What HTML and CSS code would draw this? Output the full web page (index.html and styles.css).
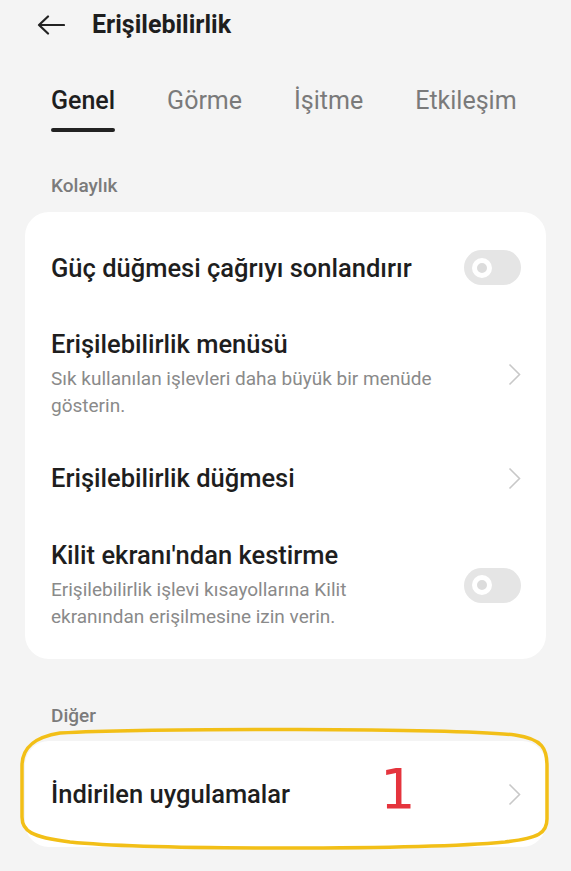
FILE: index.html
```html
<!DOCTYPE html>
<html lang="tr">
<head>
<meta charset="utf-8">
<title>Erişilebilirlik</title>
<link rel="stylesheet" href="styles.css">
</head>
<body>
<div class="screen">
  <header class="topbar">
    <svg class="back" width="28" height="20" viewBox="0 0 28 20" aria-hidden="true">
      <path d="M27 10 H2 M11 1.5 L2 10 L11 18.5" fill="none" stroke="#222" stroke-width="2.2" stroke-linecap="round" stroke-linejoin="round"/>
    </svg>
    <h1 class="title">Erişilebilirlik</h1>
  </header>

  <nav class="tabs">
    <span class="tab active">Genel</span>
    <span class="tab">Görme</span>
    <span class="tab">İşitme</span>
    <span class="tab">Etkileşim</span>
  </nav>

  <div class="section-label first">Kolaylık</div>
  <div class="card">
    <div class="row">
      <div class="row-text">
        <div class="row-title">Güç düğmesi çağrıyı sonlandırır</div>
      </div>
      <div class="toggle"><span class="knob"></span></div>
    </div>
    <div class="row">
      <div class="row-text">
        <div class="row-title">Erişilebilirlik menüsü</div>
        <div class="row-sub">Sık kullanılan işlevleri daha büyük bir menüde gösterin.</div>
      </div>
      <svg class="chev" width="13" height="23" viewBox="0 0 13 23" aria-hidden="true"><polyline points="1.5,1.5 11.5,11.5 1.5,21.5" fill="none" stroke="#c8c8c8" stroke-width="1.6"/></svg>
    </div>
    <div class="row">
      <div class="row-text">
        <div class="row-title">Erişilebilirlik düğmesi</div>
      </div>
      <svg class="chev" width="13" height="23" viewBox="0 0 13 23" aria-hidden="true"><polyline points="1.5,1.5 11.5,11.5 1.5,21.5" fill="none" stroke="#c8c8c8" stroke-width="1.6"/></svg>
    </div>
    <div class="row row-lock">
      <div class="row-text">
        <div class="row-title">Kilit ekranı'ndan kestirme</div>
        <div class="row-sub">Erişilebilirlik işlevi kısayollarına Kilit ekranından erişilmesine izin verin.</div>
      </div>
      <div class="toggle"><span class="knob"></span></div>
    </div>
  </div>

  <div class="section-label second">Diğer</div>
  <div class="card card-other">
    <div class="row row-single">
      <div class="row-text">
        <div class="row-title">İndirilen uygulamalar</div>
      </div>
      <svg class="chev" width="13" height="23" viewBox="0 0 13 23" aria-hidden="true"><polyline points="1.5,1.5 11.5,11.5 1.5,21.5" fill="none" stroke="#c8c8c8" stroke-width="1.6"/></svg>
    </div>
    <span class="mark-number">1</span>
    <svg class="mark-outline" width="545" height="140" viewBox="-10 -20 545 140" aria-hidden="true">
      <path d="M35 -8 C125 -13 425 -13 490 -6 C518 -2 522 8 522 25 L522 78 C522 92 514 97 480 101 C395 109 125 109 45 101 C6 96 -3 90 -3 76 L-3 25 C-3 6 10 -4 35 -8 Z" fill="none" stroke="#f2bf17" stroke-width="3.5"/>
    </svg>
  </div>
</div>
</body>
</html>
```

FILE: styles.css
```css
* { box-sizing: border-box; }

html, body {
  margin: 0;
  padding: 0;
  background: #f4f4f4;
}

body {
  font-family: Roboto, "Noto Sans", "Liberation Sans", sans-serif;
  color: #1e1e1e;
}

.screen {
  width: 571px;
  min-height: 871px;
  background: #f4f4f4;
}

.topbar {
  height: 50px;
  display: flex;
  align-items: center;
  padding-left: 37px;
  gap: 27px;
}

.back { display: block; flex: none; }

.title {
  margin: 0;
  font-size: 25px;
  font-weight: 700;
  line-height: 30px;
  color: #1e1e1e;
}

.tabs {
  display: flex;
  gap: 52px;
  padding: 36px 0 0 51px;
}

.tab {
  display: flex;
  flex-direction: column;
  font-size: 25px;
  line-height: 30px;
  color: #7a7a7a;
}

.tab.active {
  color: #1e1e1e;
  font-weight: 500;
}

.tab.active::after {
  content: "";
  display: block;
  height: 4px;
  margin-top: 12px;
  border-radius: 2px;
  background: #222;
}

.section-label {
  padding-left: 51px;
  font-size: 19px;
  font-weight: 500;
  line-height: 22px;
  color: #7b7b7b;
}

.section-label.first { margin-top: 43px; }
.section-label.second { margin-top: 46px; }

.card {
  margin: 15px 25px 0;
  background: #fff;
  border-radius: 24px;
  padding: 16px 0 7px;
}

.card-other {
  position: relative;
  margin-top: 14px;
  padding: 0;
}

.row {
  display: flex;
  align-items: center;
  justify-content: space-between;
  padding: 22px 25px 22px 26px;
  gap: 20px;
}

.row-lock { padding-top: 25px; }

.row-single {
  padding-top: 38px;
  padding-bottom: 38px;
}

.row-text { flex: 1; min-width: 0; }

.row-title {
  font-size: 25.5px;
  font-weight: 500;
  line-height: 30px;
  color: #1e1e1e;
}

.row-sub {
  margin-top: 6px;
  font-size: 19px;
  line-height: 27px;
  color: #8a8a8a;
  max-width: 386px;
}

.chev { display: block; flex: none; }

.toggle {
  position: relative;
  flex: none;
  width: 57px;
  height: 35px;
  border-radius: 18px;
  background: #e5e5e5;
}

.knob {
  position: absolute;
  left: 8px;
  top: 7.5px;
  width: 20px;
  height: 20px;
  border-radius: 50%;
  background: #dcdcdc;
  border: 5px solid #fff;
}

.mark-number {
  position: absolute;
  left: 355px;
  top: 20px;
  font-family: "DejaVu Sans", sans-serif;
  font-size: 56px;
  line-height: 56px;
  color: #e5343d;
}

.mark-outline {
  position: absolute;
  left: -10px;
  top: -20px;
  pointer-events: none;
  overflow: visible;
}
```
